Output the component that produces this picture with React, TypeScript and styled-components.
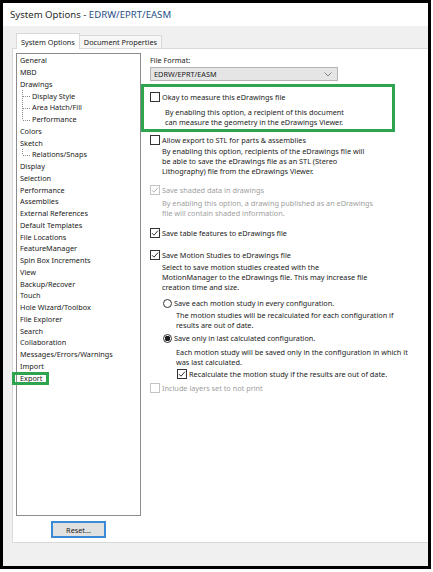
import styled, { createGlobalStyle } from "styled-components";

const GlobalStyle = createGlobalStyle`
  html, body {
    margin: 0;
    padding: 0;
    background: #fff;
  }
  body {
    font-family: "Noto Sans", "Open Sans", sans-serif;
    color: #1a1a1a;
  }
`;

type TreeEntry = { label: string; child?: "mid" | "last"; highlight?: boolean };

const tree: TreeEntry[] = [
  { label: "General" },
  { label: "MBD" },
  { label: "Drawings" },
  { label: "Display Style", child: "mid" },
  { label: "Area Hatch/Fill", child: "mid" },
  { label: "Performance", child: "last" },
  { label: "Colors" },
  { label: "Sketch" },
  { label: "Relations/Snaps", child: "last" },
  { label: "Display" },
  { label: "Selection" },
  { label: "Performance" },
  { label: "Assemblies" },
  { label: "External References" },
  { label: "Default Templates" },
  { label: "File Locations" },
  { label: "FeatureManager" },
  { label: "Spin Box Increments" },
  { label: "View" },
  { label: "Backup/Recover" },
  { label: "Touch" },
  { label: "Hole Wizard/Toolbox" },
  { label: "File Explorer" },
  { label: "Search" },
  { label: "Collaboration" },
  { label: "Messages/Errors/Warnings" },
  { label: "Import" },
  { label: "Export", highlight: true },
];

function Connector({ kind }: { kind: "mid" | "last" }) {
  return (
    <ConnectorSvg width="12" height="12" viewBox="0 0 12 12">
      <line
        x1="2.5"
        y1="0"
        x2="2.5"
        y2={kind === "last" ? 6 : 12}
        stroke="#8a8a8a"
        strokeDasharray="1 1"
      />
      <line x1="3" y1="6.5" x2="10" y2="6.5" stroke="#8a8a8a" strokeDasharray="1 1" />
    </ConnectorSvg>
  );
}

function Check({ checked, disabled }: { checked?: boolean; disabled?: boolean }) {
  return (
    <CheckBox $disabled={disabled}>
      {checked && (
        <svg width="8" height="8" viewBox="0 0 8 8">
          <polyline
            points="1,4.2 3,6.2 7,1.6"
            fill="none"
            stroke={disabled ? "#b5b5b5" : "#333"}
            strokeWidth="1"
          />
        </svg>
      )}
    </CheckBox>
  );
}

function Desc({
  lines,
  top,
  indent,
  disabled,
}: {
  lines: string[];
  top: number;
  indent?: number;
  disabled?: boolean;
}) {
  return (
    <DescBlock $top={top} $indent={indent ?? 12} $disabled={disabled}>
      {lines.map((l) => (
        <Line key={l}>{l}</Line>
      ))}
    </DescBlock>
  );
}

export default function App() {
  return (
    <>
      <GlobalStyle />
      <Frame>
        <TitleBar>
          System Options - <TitleDoc>EDRW/EPRT/EASM</TitleDoc>
        </TitleBar>
        <TabStrip>
          <Tab $active>System Options</Tab>
          <Tab>Document Properties</Tab>
        </TabStrip>
        <TabPage>
          <LeftCol>
            <Tree>
              {tree.map((t, i) => (
                <TreeRow key={i}>
                  {t.child && <Connector kind={t.child} />}
                  <TreeLabel $highlight={t.highlight}>{t.label}</TreeLabel>
                </TreeRow>
              ))}
            </Tree>
            <ResetButton>Reset...</ResetButton>
          </LeftCol>

          <RightCol>
            <FieldLabel>File Format:</FieldLabel>
            <Select>
              <span>EDRW/EPRT/EASM</span>
              <svg width="8" height="5" viewBox="0 0 8 5">
                <polyline points="0.5,0.5 4,4 7.5,0.5" fill="none" stroke="#7a7a7a" strokeWidth="0.9" />
              </svg>
            </Select>

            <Callout>
              <OptionRow $top={0}>
                <Check />
                <span>Okay to measure this eDrawings file</span>
              </OptionRow>
              <Desc
                top={5}
                indent={15}
                lines={[
                  "By enabling this option, a recipient of this document",
                  "can measure the geometry in the eDrawings Viewer.",
                ]}
              />
            </Callout>

            <OptionRow $top={3}>
              <Check />
              <span>Allow export to STL for parts &amp; assemblies</span>
            </OptionRow>
            <Desc
              top={1}
              lines={[
                "By enabling this option, recipients of the eDrawings file will",
                "be able to save the eDrawings file as an STL (Stereo",
                "Lithography) file from the eDrawings Viewer.",
              ]}
            />

            <OptionRow $top={9} $disabled>
              <Check checked disabled />
              <span>Save shaded data in drawings</span>
            </OptionRow>
            <Desc
              top={3}
              disabled
              lines={[
                "By enabling this option, a drawing published as an eDrawings",
                "file will contain shaded information.",
              ]}
            />

            <OptionRow $top={10}>
              <Check checked />
              <span>Save table features to eDrawings file</span>
            </OptionRow>

            <OptionRow $top={12}>
              <Check checked />
              <span>Save Motion Studies to eDrawings file</span>
            </OptionRow>
            <Desc
              top={2}
              lines={[
                "Select to save motion studies created with the",
                "MotionManager to the eDrawings file.  This may increase file",
                "creation time and size.",
              ]}
            />

            <OptionRow $top={6} $indent={13}>
              <Radio />
              <span>Save each motion study in every configuration.</span>
            </OptionRow>
            <Desc
              top={2}
              indent={26}
              lines={[
                "The motion studies will be recalculated for each configuration if",
                "results are out of date.",
              ]}
            />

            <OptionRow $top={3} $indent={13}>
              <Radio $checked />
              <span>Save only in last calculated configuration.</span>
            </OptionRow>
            <Desc
              top={4}
              indent={26}
              lines={[
                "Each motion study will be saved only in the configuration in which it",
                "was last calculated.",
              ]}
            />

            <OptionRow $top={2} $indent={27}>
              <Check checked />
              <span>Recalculate the motion study if the results are out of date.</span>
            </OptionRow>

            <OptionRow $top={4} $disabled>
              <Check disabled />
              <span>Include layers set to not print</span>
            </OptionRow>
          </RightCol>
        </TabPage>
        <BottomBar />
      </Frame>
    </>
  );
}

const Frame = styled.div`
  box-sizing: border-box;
  width: 431px;
  height: 569px;
  border: 3px solid #000;
  background: #f0f0f0;
  display: flex;
  flex-direction: column;
  overflow: hidden;
  font-size: 7.3px;
`;

const TitleBar = styled.div`
  height: 23px;
  flex: none;
  background: #fff;
  display: flex;
  align-items: center;
  padding-left: 7px;
  font-size: 9.6px;
  color: #2a2a2a;
  white-space: pre;
`;

const TitleDoc = styled.span`
  color: #1f4f86;
`;

const TabStrip = styled.div`
  height: 22px;
  flex: none;
  display: flex;
  align-items: flex-end;
  padding-left: 13px;
`;

const Tab = styled.div<{ $active?: boolean }>`
  box-sizing: border-box;
  height: ${(p) => (p.$active ? "16px" : "13px")};
  padding: 0 4px;
  display: flex;
  align-items: center;
  border: 1px solid #d9d9d9;
  border-bottom: none;
  border-left: ${(p) => (p.$active ? "1px solid #d9d9d9" : "none")};
  background: ${(p) => (p.$active ? "#fff" : "#f7f7f7")};
  margin-bottom: ${(p) => (p.$active ? "-1px" : "0")};
  position: relative;
  z-index: ${(p) => (p.$active ? 1 : 0)};
  color: #1a1a1a;
  white-space: nowrap;
`;

const TabPage = styled.div`
  height: 493px;
  flex: none;
  margin-left: 9px;
  background: #fff;
  border-top: 1px solid #d9d9d9;
  border-left: 1px solid #d9d9d9;
  border-bottom: 1px solid #d9d9d9;
  display: flex;
`;

const LeftCol = styled.div`
  width: 127px;
  flex: none;
  padding: 4px 0 0 3px;
  display: flex;
  flex-direction: column;
`;

const Tree = styled.div`
  box-sizing: border-box;
  width: 125px;
  height: 463px;
  border: 1px solid #8c8c8c;
  padding: 1px 0 0 3px;
`;

const TreeRow = styled.div`
  height: 11.75px;
  display: flex;
  align-items: center;
  white-space: nowrap;
`;

const ConnectorSvg = styled.svg`
  flex: none;
`;

const TreeLabel = styled.span<{ $highlight?: boolean }>`
  line-height: 11px;
  ${(p) =>
    p.$highlight &&
    `
    display: inline-block;
    margin-left: -5px;
    padding: 0 4px 0 5px;
    line-height: 7px;
    height: 7px;
    outline: 3px solid #2ea44f;
  `}
`;

const ResetButton = styled.button`
  box-sizing: border-box;
  margin: 5px 0 0 35px;
  width: 55px;
  height: 17px;
  padding: 0;
  border: 2px solid #3b8ad6;
  background: #e1e1e1;
  font: inherit;
  color: #1a1a1a;
`;

const RightCol = styled.div`
  flex: 1;
  padding: 6px 0 0 7px;
  display: flex;
  flex-direction: column;
  align-items: flex-start;
`;

const FieldLabel = styled.div`
  line-height: 10px;
`;

const Select = styled.div`
  box-sizing: border-box;
  margin-top: 2px;
  width: 188px;
  height: 14px;
  border: 1px solid #b4b4b4;
  background: #e5e5e5;
  display: flex;
  align-items: center;
  justify-content: space-between;
  padding: 0 5px 0 3px;
`;

const Callout = styled.div`
  box-sizing: border-box;
  margin: 3px 0 0 -9px;
  width: 254px;
  height: 48px;
  border: 3px solid #2ea44f;
  padding: 5px 0 0 6px;
`;

const OptionRow = styled.div<{ $top: number; $indent?: number; $disabled?: boolean }>`
  margin-top: ${(p) => p.$top}px;
  margin-left: ${(p) => p.$indent ?? 0}px;
  height: 10px;
  display: flex;
  align-items: center;
  white-space: nowrap;
  color: ${(p) => (p.$disabled ? "#a0a0a0" : "#1a1a1a")};
`;

const CheckBox = styled.span<{ $disabled?: boolean }>`
  box-sizing: border-box;
  width: 10px;
  height: 10px;
  flex: none;
  margin-right: 2px;
  border: 1px solid ${(p) => (p.$disabled ? "#c4c4c4" : "#333")};
  background: #fff;
  display: flex;
  align-items: center;
  justify-content: center;
`;

const Radio = styled.span<{ $checked?: boolean }>`
  box-sizing: border-box;
  width: 9px;
  height: 9px;
  flex: none;
  margin-right: 2px;
  border-radius: 50%;
  border: 1px solid #333;
  background: ${(p) =>
    p.$checked ? "radial-gradient(circle, #1a1a1a 0 2.6px, #fff 3px)" : "#fff"};
`;

const DescBlock = styled.div<{ $top: number; $indent: number; $disabled?: boolean }>`
  margin-top: ${(p) => p.$top}px;
  margin-left: ${(p) => p.$indent}px;
  color: ${(p) => (p.$disabled ? "#a0a0a0" : "#1a1a1a")};
`;

const Line = styled.div`
  line-height: 10px;
  white-space: nowrap;
`;

const BottomBar = styled.div`
  flex: 1;
`;
